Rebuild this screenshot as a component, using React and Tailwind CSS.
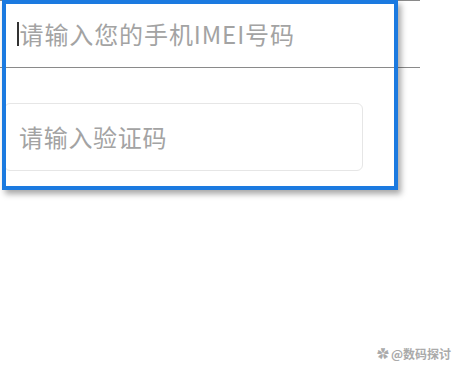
export default function App() {
  const font = { fontFamily: '"Noto Sans CJK SC", "Noto Sans", sans-serif' };
  return (
    <div className="relative w-[458px] h-[376px] bg-white overflow-hidden" style={font}>
      <div className="w-[420px] h-[68px] border-t border-b border-[#8a8a8a] flex items-center pl-[17px]">
        <div className="w-[1.5px] h-[24px] bg-[#333] mr-[1px]" />
        <span className="text-[24px] text-[#a3a3a3] leading-none tracking-[0.9px] whitespace-nowrap">请输入您的手机IMEI号码</span>
      </div>
      <div className="mt-[35px] ml-[4px] w-[359px] h-[68px] border border-[#e6e6e6] rounded-[6px] flex items-center pl-[14px]">
        <span className="text-[24px] text-[#a3a3a3] leading-none tracking-[0.7px] whitespace-nowrap">请输入验证码</span>
      </div>
      <div className="absolute left-[2px] top-0 w-[396px] h-[190px] border-[4px] border-[#1b7ae0] shadow-[3px_4px_6px_rgba(0,0,0,0.35)] pointer-events-none" />
      <div className="absolute left-[377px] top-[348px] flex items-center gap-[2px] text-[12px] text-[#aaaaaa] leading-none font-bold whitespace-nowrap">
        <span className="text-[12px]">✿</span>
        <span>@数码探讨</span>
      </div>
    </div>
  );
}
